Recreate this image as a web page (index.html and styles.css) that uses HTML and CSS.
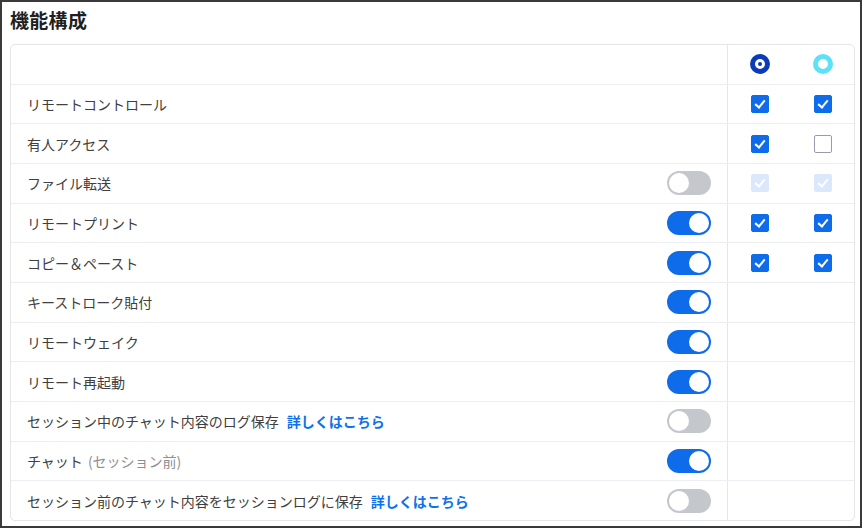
FILE: index.html
```html
<!DOCTYPE html>
<html lang="ja">
<head>
<meta charset="utf-8">
<link rel="stylesheet" href="styles.css">
</head>
<body>
<div class="frame">
  <h1 class="title">機能構成</h1>
  <div class="card">
    <div class="row head">
      <div class="main"></div>
      <div class="side">
        <div class="col">
          <svg class="ring" viewBox="0 0 20 20"><circle cx="10" cy="10" r="7.5" fill="none" stroke="#0b3bb5" stroke-width="5"/><circle cx="10" cy="10" r="2" fill="#0b3bb5"/></svg>
        </div>
        <div class="col">
          <svg class="ring" viewBox="0 0 20 20"><circle cx="10" cy="10" r="7.5" fill="none" stroke="#5de0f8" stroke-width="5"/></svg>
        </div>
      </div>
    </div>
    <div class="row">
      <div class="main"><span class="label">リモートコントロール</span></div>
      <div class="side"><div class="col"><span class="cb on"></span></div><div class="col"><span class="cb on"></span></div></div>
    </div>
    <div class="row">
      <div class="main"><span class="label">有人アクセス</span></div>
      <div class="side"><div class="col"><span class="cb on"></span></div><div class="col"><span class="cb"></span></div></div>
    </div>
    <div class="row">
      <div class="main"><span class="label">ファイル転送</span><span class="tg"></span></div>
      <div class="side"><div class="col"><span class="cb dis"></span></div><div class="col"><span class="cb dis"></span></div></div>
    </div>
    <div class="row">
      <div class="main"><span class="label">リモートプリント</span><span class="tg on"></span></div>
      <div class="side"><div class="col"><span class="cb on"></span></div><div class="col"><span class="cb on"></span></div></div>
    </div>
    <div class="row">
      <div class="main"><span class="label">コピー＆ペースト</span><span class="tg on"></span></div>
      <div class="side"><div class="col"><span class="cb on"></span></div><div class="col"><span class="cb on"></span></div></div>
    </div>
    <div class="row">
      <div class="main"><span class="label">キーストローク貼付</span><span class="tg on"></span></div>
      <div class="side"></div>
    </div>
    <div class="row">
      <div class="main"><span class="label">リモートウェイク</span><span class="tg on"></span></div>
      <div class="side"></div>
    </div>
    <div class="row">
      <div class="main"><span class="label">リモート再起動</span><span class="tg on"></span></div>
      <div class="side"></div>
    </div>
    <div class="row">
      <div class="main"><span class="label">セッション中のチャット内容のログ保存<a class="link">詳しくはこちら</a></span><span class="tg"></span></div>
      <div class="side"></div>
    </div>
    <div class="row">
      <div class="main"><span class="label">チャット<span class="sub">(セッション前)</span></span><span class="tg on"></span></div>
      <div class="side"></div>
    </div>
    <div class="row last">
      <div class="main"><span class="label">セッション前のチャット内容をセッションログに保存<a class="link">詳しくはこちら</a></span><span class="tg"></span></div>
      <div class="side"></div>
    </div>
  </div>
</div>
</body>
</html>
```
FILE: styles.css
```css
html, body {
  margin: 0;
  padding: 0;
  background: #fff;
}
.frame {
  width: 862px;
  height: 528px;
  box-sizing: border-box;
  border: 2px solid #3a3a3a;
  padding: 0 5px 0 8px;
  font-family: "Noto Sans CJK JP", "Noto Sans", sans-serif;
  color: #3b3b3b;
  display: flex;
  flex-direction: column;
}
.title {
  margin: 0;
  height: 42px;
  font-size: 19px;
  font-weight: 700;
  color: #1f1f1f;
  line-height: 36px;
  letter-spacing: 0.3px;
}
.card {
  border: 1px solid #e4e6ea;
  border-radius: 5px;
  display: flex;
  flex-direction: column;
}
.row {
  display: flex;
  height: 39.67px;
  box-sizing: border-box;
  border-bottom: 1.5px solid #eceef1;
}
.row.last {
  border-bottom: none;
  height: 38.67px;
}
.main {
  flex: 1;
  display: flex;
  align-items: center;
  justify-content: space-between;
  padding: 0 16px;
  border-right: 1px solid #e4e6ea;
}
.side {
  width: 126px;
  display: flex;
}
.col {
  width: 63px;
  display: flex;
  align-items: center;
  justify-content: center;
}
.label {
  font-size: 14px;
  color: #404040;
}
.link {
  color: #0e71eb;
  font-weight: 700;
  margin-left: 8px;
}
.sub {
  color: #8d8d95;
  margin-left: 5px;
}
.ring {
  width: 20px;
  height: 20px;
  display: block;
}
.cb {
  width: 18px;
  height: 18px;
  box-sizing: border-box;
  border: 1.5px solid #9a9aae;
  border-radius: 2px;
  background: #fff;
  position: relative;
  display: block;
}
.cb.on {
  background: #0e6cea;
  border-color: #0e6cea;
}
.cb.dis {
  background: #dbe7fb;
  border-color: #dbe7fb;
}
.cb.on::after, .cb.dis::after {
  content: "";
  position: absolute;
  left: 5px;
  top: 2px;
  width: 4px;
  height: 8px;
  border: solid #fff;
  border-width: 0 2px 2px 0;
  transform: rotate(40deg);
}
.tg {
  width: 44px;
  height: 24px;
  box-sizing: border-box;
  border-radius: 12px;
  background: #c4c7cc;
  position: relative;
  display: block;
}
.tg::after {
  content: "";
  position: absolute;
  left: 2px;
  top: 2px;
  width: 20px;
  height: 20px;
  border-radius: 50%;
  background: #fff;
}
.tg.on {
  background: #0e6cea;
}
.tg.on::after {
  left: 22px;
}
```
